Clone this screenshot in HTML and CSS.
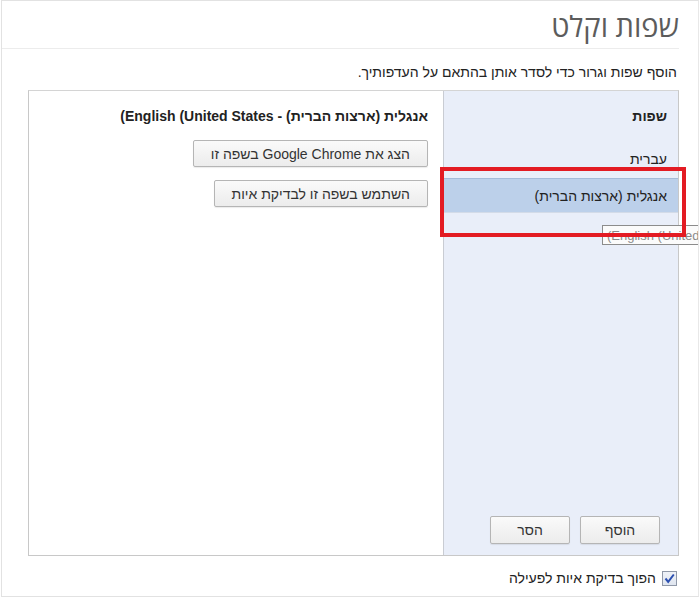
FILE: index.html
```html
<!DOCTYPE html>
<html lang="he" dir="rtl">
<head>
<meta charset="utf-8">
<title>שפות וקלט</title>
<link rel="stylesheet" href="styles.css">
</head>
<body>
<div class="window">
  <header class="head">
    <h1 class="title">שפות וקלט</h1>
  </header>
  <p class="desc">הוסף שפות וגרור כדי לסדר אותן בהתאם על העדפותיך.</p>
  <div class="panel">
    <aside class="side">
      <div class="side-head">שפות</div>
      <ul class="langs">
        <li class="lang">עברית</li>
        <li class="lang selected">אנגלית (ארצות הברית)</li>
      </ul>
      <div class="side-actions">
        <button class="btn btn-small">הוסף</button>
        <button class="btn btn-small">הסר</button>
      </div>
    </aside>
    <section class="detail">
      <div class="detail-head">אנגלית (ארצות הברית) - <bdi dir="ltr">(English (United States</bdi></div>
      <button class="btn btn-wide">הצג את Google Chrome בשפה זו</button>
      <button class="btn btn-wide">השתמש בשפה זו לבדיקת איות</button>
    </section>
  </div>
  <label class="check-row">
    <span class="check"><svg width="11" height="11" viewBox="0 0 11 11"><path d="M1.5 5.5 L4.2 8.8 L9.8 1.5" fill="none" stroke="#2b4fb0" stroke-width="2"/></svg></span>
    <span>הפוך בדיקת איות לפעילה</span>
  </label>
  <div class="tooltip">(English (United States</div>
  <div class="highlight"></div>
</div>
</body>
</html>
```
FILE: styles.css
```css
html, body {
  margin: 0;
  padding: 0;
  background: #ffffff;
}
body {
  font-family: "Liberation Sans", "DejaVu Sans", Arial, sans-serif;
  font-size: 14px;
  color: #222;
}
.window {
  position: relative;
  box-sizing: border-box;
  width: 698px;
  height: 597px;
  border: 1px solid #e2e2e2;
  border-right-color: #e8e8e8;
  overflow: hidden;
}
.head {
  height: 47px;
  margin-right: 19px;
  border-bottom: 1px solid #ececec;
  display: flex;
  align-items: flex-end;
}
.title {
  margin: 0 0 5px 0;
  font-family: "Open Sans", "DejaVu Sans", "Liberation Sans", sans-serif;
  font-weight: normal;
  font-size: 29px;
  color: #5c5c5c;
  line-height: 34px;
}
.desc {
  margin: 15px 21px 0 0;
  font-size: 14px;
  line-height: 17px;
  color: #222;
}
.panel {
  display: flex;
  box-sizing: border-box;
  margin: 9px 19px 0 0;
  width: 651px;
  height: 466px;
  border: 1px solid #c8c8c8;
  border-top-color: #d4d4d4;
}
.side {
  width: 234px;
  flex: none;
  background: #e9eef9;
  border-left: 1px solid #c9ccd3;
  display: flex;
  flex-direction: column;
}
.side-head {
  height: 52px;
  padding: 17px 11px 0 0;
  box-sizing: border-box;
  font-weight: bold;
  font-size: 14px;
}
.langs {
  list-style: none;
  margin: 0;
  padding: 0;
  flex: 1;
}
.lang {
  height: 35px;
  box-sizing: border-box;
  padding: 8px 11px 0 0;
  font-size: 14px;
}
.lang.selected {
  background: #bcd0ea;
  border-top: 1px solid #a5bbd8;
  border-bottom: 1px solid #d3dbe8;
  padding-top: 9px;
}
.side-actions {
  display: flex;
  gap: 10px;
  padding: 0 18px 11px 0;
}
.btn {
  font-family: "Liberation Sans", "DejaVu Sans", Arial, sans-serif;
  font-size: 14px;
  color: #333;
  background: linear-gradient(#fafafa, #ececec);
  border: 1px solid #b5b5b5;
  border-radius: 2px;
  box-shadow: 0 1px 1px rgba(0,0,0,0.08);
  padding: 0 12px;
  cursor: default;
}
.btn-small {
  width: 80px;
  height: 28px;
}
.detail {
  flex: 1;
  display: flex;
  flex-direction: column;
  align-items: flex-start;
  padding: 17px 15px 0 0;
}
.detail-head {
  font-weight: bold;
  font-size: 14px;
  line-height: 17px;
  margin-bottom: 15px;
}
.btn-wide {
  height: 27px;
  margin-bottom: 13px;
  padding: 0 17px;
}
.check-row {
  display: flex;
  align-items: center;
  gap: 6px;
  margin: 14px 21px 0 0;
  font-size: 14px;
}
.check {
  width: 13px;
  height: 13px;
  border: 1px solid #8f98a8;
  background: linear-gradient(#eef1f7, #dfe5ef);
  display: flex;
  align-items: center;
  justify-content: center;
}
.tooltip {
  position: absolute;
  left: 600px;
  top: 224px;
  height: 20px;
  box-sizing: border-box;
  padding: 2px 4px;
  border: 1px solid #8c8c8c;
  background: #fbfbfb;
  color: #8a8a8a;
  font-size: 13px;
  line-height: 15px;
  white-space: nowrap;
  direction: ltr;
}
.highlight {
  position: absolute;
  left: 438px;
  top: 166px;
  width: 246px;
  height: 70px;
  box-sizing: border-box;
  border: 4px solid #e31b23;
}
```
